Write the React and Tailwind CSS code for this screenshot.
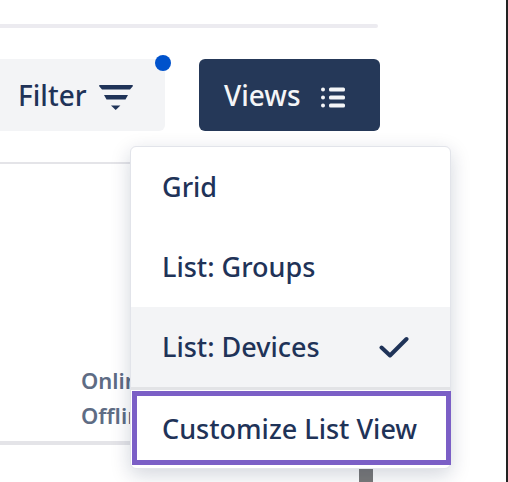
const font = { fontFamily: '"Noto Sans", sans-serif' };

function FilterIcon() {
  return (
    <svg width="34" height="25" viewBox="0 0 34 25" fill="#1f3358" className="mt-1">
      <path d="M.8 0h32.400a.8.8 0 0 1 .6 1.300L31 4.500H3L.2 1.300A.8.8 0 0 1 .8 0z" />
      <path d="M5 10h24l-2.500 4.500h-19z" />
      <path d="M12 20.500h9.400L16.700 25z" />
    </svg>
  );
}

function ListIcon() {
  return (
    <svg width="24" height="21" viewBox="0 0 24 21" fill="#f4f5f7" className="mt-1">
      <circle cx="2" cy="2.500" r="2" />
      <circle cx="2" cy="10.500" r="2" />
      <circle cx="2" cy="18.500" r="2" />
      <rect x="8" y="0.500" width="16" height="4" rx="1.500" />
      <rect x="8" y="8.500" width="16" height="4" rx="1.500" />
      <rect x="8" y="16.500" width="16" height="4" rx="1.500" />
    </svg>
  );
}

function CheckIcon() {
  return (
    <svg width="30" height="22" viewBox="0 0 30 22" fill="none" stroke="#1f3358" strokeWidth="4" strokeLinecap="round" strokeLinejoin="round">
      <path d="M2.500 11.500l8.500 8L27.500 3" />
    </svg>
  );
}

function MenuItem({ label, active }) {
  return (
    <div
      className={`flex h-20 items-center justify-between pl-[31px] pr-[41px] text-[27px] font-medium text-[#1f3358] ${active ? "bg-[#f3f4f6]" : ""}`}
    >
      <span>{label}</span>
      {active && <CheckIcon />}
    </div>
  );
}

export default function App() {
  return (
    <div
      className="relative h-[482px] w-[508px] overflow-hidden border-r-2 border-[#222] bg-white"
      style={font}
    >
      <div className="pt-6">
        <div className="h-1 w-[378px] rounded-r-sm bg-[#ecebf0]" />
      </div>

      <div className="mt-[31px] flex gap-[34px]">
        <div className="relative flex h-[72px] w-[165px] items-center gap-3 rounded-r-md bg-[#f3f4f6] pl-[18px] text-[28px] font-medium text-[#1f3358]">
          <span>Filter</span>
          <FilterIcon />
          <span className="absolute right-[-6px] top-[-4px] h-4 w-4 rounded-full bg-[#0052cc]" />
        </div>
        <div className="flex h-[72px] w-[181px] items-center gap-5 rounded-md bg-[#253858] pl-[25px] text-[28px] font-medium text-[#f4f5f7]">
          <span>Views</span>
          <ListIcon />
        </div>
      </div>

      <div className="mt-[31px] h-[283px] w-[360px] border-b-4 border-t-2 border-[#e4e4e8]">
        <div className="pl-[81px] pt-[199px] text-[22px] font-semibold leading-[35px] text-[#5e6c84]">
          <div>Online</div>
          <div>Offline</div>
        </div>
      </div>
      <div className="ml-[359px] mt-6 h-[13px] w-[14px] bg-[#7a7a7a]" />

      <div className="absolute left-[130px] top-[146px] w-[321px] rounded-md border border-[#e2e4ea] bg-white pb-[3px] shadow-[0_6px_20px_rgba(9,30,66,0.18)]">
        <MenuItem label="Grid" />
        <MenuItem label="List: Groups" />
        <MenuItem label="List: Devices" active />
        <div className="h-[3px] bg-[#e2e3e6]" />
        <div className="-mr-px ml-px mt-px flex h-[74px] items-center border-[5px] border-[#7b5fc6] pb-px pl-[25px] pt-[3px] text-[27px] font-medium text-[#1f3358]">
          Customize List View
        </div>
      </div>
    </div>
  );
}
